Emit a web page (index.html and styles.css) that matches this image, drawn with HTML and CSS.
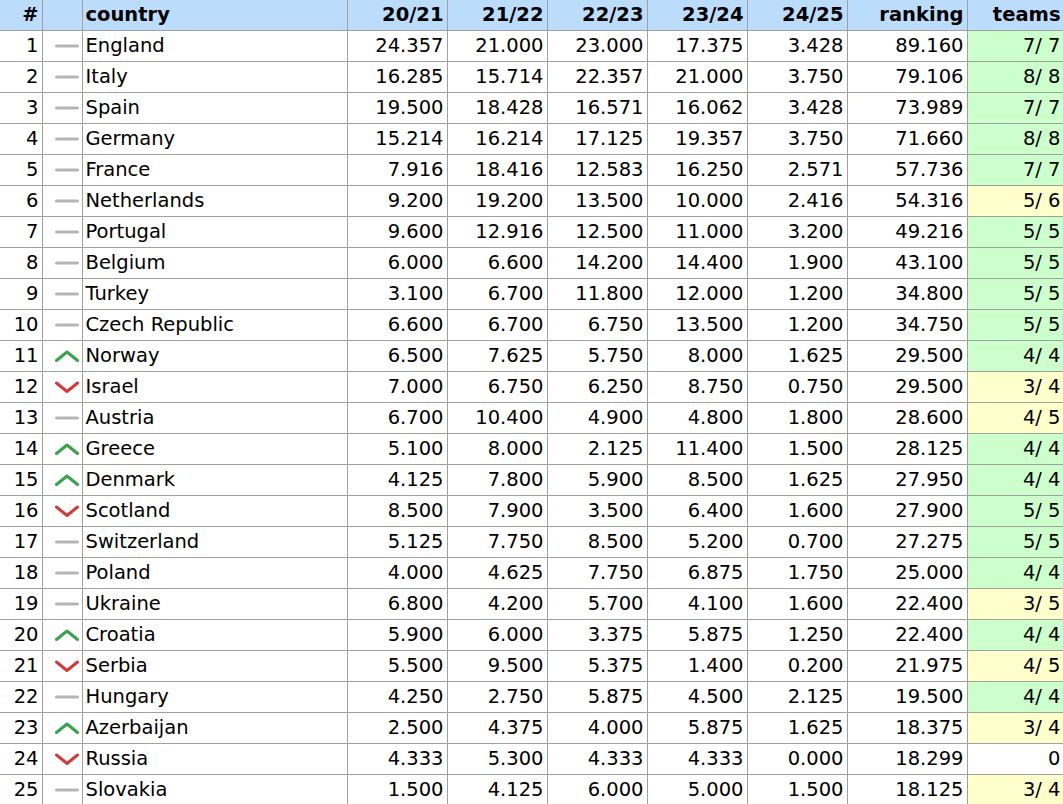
FILE: index.html
```html
<!DOCTYPE html>
<html>
<head>
<meta charset="utf-8">
<link rel="stylesheet" href="styles.css">
</head>
<body>
<svg width="0" height="0" class="defs">
  <defs>
    <symbol id="same" viewBox="0 0 24 14"><line x1="1.5" y1="7" x2="22.5" y2="7" stroke="#b5b5b5" stroke-width="3" stroke-linecap="round"/></symbol>
    <symbol id="up" viewBox="0 0 24 14"><polyline points="1.5,11.5 12,3 22.5,11.5" fill="none" stroke="#3aa24a" stroke-width="3" stroke-linecap="round" stroke-linejoin="round"/></symbol>
    <symbol id="down" viewBox="0 0 24 14"><polyline points="1.5,3 12,11.5 22.5,3" fill="none" stroke="#d43a35" stroke-width="3" stroke-linecap="round" stroke-linejoin="round"/></symbol>
  </defs>
</svg>
<table class="rank">
  <colgroup>
    <col class="c-pos"><col class="c-ico"><col class="c-country">
    <col class="c-season"><col class="c-season"><col class="c-season"><col class="c-season"><col class="c-season">
    <col class="c-rank"><col class="c-teams">
  </colgroup>
  <thead>
    <tr><th class="num">#</th><th></th><th class="txt">country</th><th class="num">20/21</th><th class="num">21/22</th><th class="num">22/23</th><th class="num">23/24</th><th class="num">24/25</th><th class="num">ranking</th><th class="num">teams</th></tr>
  </thead>
  <tbody>
    <tr><td class="num">1</td><td class="ico"><svg><use href="#same"/></svg></td><td>England</td><td class="num">24.357</td><td class="num">21.000</td><td class="num">23.000</td><td class="num">17.375</td><td class="num">3.428</td><td class="num">89.160</td><td class="num full">7/ 7</td></tr>
    <tr><td class="num">2</td><td class="ico"><svg><use href="#same"/></svg></td><td>Italy</td><td class="num">16.285</td><td class="num">15.714</td><td class="num">22.357</td><td class="num">21.000</td><td class="num">3.750</td><td class="num">79.106</td><td class="num full">8/ 8</td></tr>
    <tr><td class="num">3</td><td class="ico"><svg><use href="#same"/></svg></td><td>Spain</td><td class="num">19.500</td><td class="num">18.428</td><td class="num">16.571</td><td class="num">16.062</td><td class="num">3.428</td><td class="num">73.989</td><td class="num full">7/ 7</td></tr>
    <tr><td class="num">4</td><td class="ico"><svg><use href="#same"/></svg></td><td>Germany</td><td class="num">15.214</td><td class="num">16.214</td><td class="num">17.125</td><td class="num">19.357</td><td class="num">3.750</td><td class="num">71.660</td><td class="num full">8/ 8</td></tr>
    <tr><td class="num">5</td><td class="ico"><svg><use href="#same"/></svg></td><td>France</td><td class="num">7.916</td><td class="num">18.416</td><td class="num">12.583</td><td class="num">16.250</td><td class="num">2.571</td><td class="num">57.736</td><td class="num full">7/ 7</td></tr>
    <tr><td class="num">6</td><td class="ico"><svg><use href="#same"/></svg></td><td>Netherlands</td><td class="num">9.200</td><td class="num">19.200</td><td class="num">13.500</td><td class="num">10.000</td><td class="num">2.416</td><td class="num">54.316</td><td class="num part">5/ 6</td></tr>
    <tr><td class="num">7</td><td class="ico"><svg><use href="#same"/></svg></td><td>Portugal</td><td class="num">9.600</td><td class="num">12.916</td><td class="num">12.500</td><td class="num">11.000</td><td class="num">3.200</td><td class="num">49.216</td><td class="num full">5/ 5</td></tr>
    <tr><td class="num">8</td><td class="ico"><svg><use href="#same"/></svg></td><td>Belgium</td><td class="num">6.000</td><td class="num">6.600</td><td class="num">14.200</td><td class="num">14.400</td><td class="num">1.900</td><td class="num">43.100</td><td class="num full">5/ 5</td></tr>
    <tr><td class="num">9</td><td class="ico"><svg><use href="#same"/></svg></td><td>Turkey</td><td class="num">3.100</td><td class="num">6.700</td><td class="num">11.800</td><td class="num">12.000</td><td class="num">1.200</td><td class="num">34.800</td><td class="num full">5/ 5</td></tr>
    <tr><td class="num">10</td><td class="ico"><svg><use href="#same"/></svg></td><td>Czech Republic</td><td class="num">6.600</td><td class="num">6.700</td><td class="num">6.750</td><td class="num">13.500</td><td class="num">1.200</td><td class="num">34.750</td><td class="num full">5/ 5</td></tr>
    <tr><td class="num">11</td><td class="ico"><svg><use href="#up"/></svg></td><td>Norway</td><td class="num">6.500</td><td class="num">7.625</td><td class="num">5.750</td><td class="num">8.000</td><td class="num">1.625</td><td class="num">29.500</td><td class="num full">4/ 4</td></tr>
    <tr><td class="num">12</td><td class="ico"><svg><use href="#down"/></svg></td><td>Israel</td><td class="num">7.000</td><td class="num">6.750</td><td class="num">6.250</td><td class="num">8.750</td><td class="num">0.750</td><td class="num">29.500</td><td class="num part">3/ 4</td></tr>
    <tr><td class="num">13</td><td class="ico"><svg><use href="#same"/></svg></td><td>Austria</td><td class="num">6.700</td><td class="num">10.400</td><td class="num">4.900</td><td class="num">4.800</td><td class="num">1.800</td><td class="num">28.600</td><td class="num part">4/ 5</td></tr>
    <tr><td class="num">14</td><td class="ico"><svg><use href="#up"/></svg></td><td>Greece</td><td class="num">5.100</td><td class="num">8.000</td><td class="num">2.125</td><td class="num">11.400</td><td class="num">1.500</td><td class="num">28.125</td><td class="num full">4/ 4</td></tr>
    <tr><td class="num">15</td><td class="ico"><svg><use href="#up"/></svg></td><td>Denmark</td><td class="num">4.125</td><td class="num">7.800</td><td class="num">5.900</td><td class="num">8.500</td><td class="num">1.625</td><td class="num">27.950</td><td class="num full">4/ 4</td></tr>
    <tr><td class="num">16</td><td class="ico"><svg><use href="#down"/></svg></td><td>Scotland</td><td class="num">8.500</td><td class="num">7.900</td><td class="num">3.500</td><td class="num">6.400</td><td class="num">1.600</td><td class="num">27.900</td><td class="num full">5/ 5</td></tr>
    <tr><td class="num">17</td><td class="ico"><svg><use href="#same"/></svg></td><td>Switzerland</td><td class="num">5.125</td><td class="num">7.750</td><td class="num">8.500</td><td class="num">5.200</td><td class="num">0.700</td><td class="num">27.275</td><td class="num full">5/ 5</td></tr>
    <tr><td class="num">18</td><td class="ico"><svg><use href="#same"/></svg></td><td>Poland</td><td class="num">4.000</td><td class="num">4.625</td><td class="num">7.750</td><td class="num">6.875</td><td class="num">1.750</td><td class="num">25.000</td><td class="num full">4/ 4</td></tr>
    <tr><td class="num">19</td><td class="ico"><svg><use href="#same"/></svg></td><td>Ukraine</td><td class="num">6.800</td><td class="num">4.200</td><td class="num">5.700</td><td class="num">4.100</td><td class="num">1.600</td><td class="num">22.400</td><td class="num part">3/ 5</td></tr>
    <tr><td class="num">20</td><td class="ico"><svg><use href="#up"/></svg></td><td>Croatia</td><td class="num">5.900</td><td class="num">6.000</td><td class="num">3.375</td><td class="num">5.875</td><td class="num">1.250</td><td class="num">22.400</td><td class="num full">4/ 4</td></tr>
    <tr><td class="num">21</td><td class="ico"><svg><use href="#down"/></svg></td><td>Serbia</td><td class="num">5.500</td><td class="num">9.500</td><td class="num">5.375</td><td class="num">1.400</td><td class="num">0.200</td><td class="num">21.975</td><td class="num part">4/ 5</td></tr>
    <tr><td class="num">22</td><td class="ico"><svg><use href="#same"/></svg></td><td>Hungary</td><td class="num">4.250</td><td class="num">2.750</td><td class="num">5.875</td><td class="num">4.500</td><td class="num">2.125</td><td class="num">19.500</td><td class="num full">4/ 4</td></tr>
    <tr><td class="num">23</td><td class="ico"><svg><use href="#up"/></svg></td><td>Azerbaijan</td><td class="num">2.500</td><td class="num">4.375</td><td class="num">4.000</td><td class="num">5.875</td><td class="num">1.625</td><td class="num">18.375</td><td class="num part">3/ 4</td></tr>
    <tr><td class="num">24</td><td class="ico"><svg><use href="#down"/></svg></td><td>Russia</td><td class="num">4.333</td><td class="num">5.300</td><td class="num">4.333</td><td class="num">4.333</td><td class="num">0.000</td><td class="num">18.299</td><td class="num">0</td></tr>
    <tr><td class="num">25</td><td class="ico"><svg><use href="#same"/></svg></td><td>Slovakia</td><td class="num">1.500</td><td class="num">4.125</td><td class="num">6.000</td><td class="num">5.000</td><td class="num">1.500</td><td class="num">18.125</td><td class="num part">3/ 4</td></tr>
  </tbody>
</table>
</body>
</html>
```
FILE: styles.css
```css
html, body {
  margin: 0;
  padding: 0;
  background: #ffffff;
}
body {
  font-family: "DejaVu Sans", Verdana, sans-serif;
  font-size: 19.5px;
  color: #000;
  overflow: hidden;
}
.defs {
  position: absolute;
  width: 0;
  height: 0;
}
.rank {
  border-collapse: collapse;
  table-layout: fixed;
  width: 1064px;
}
.c-pos { width: 42px; }
.c-ico { width: 40px; }
.c-country { width: 265px; }
.c-season { width: 100px; }
.c-rank { width: 120px; }
.c-teams { width: 97px; }

.rank th, .rank td {
  border: 1px solid #a0a0a0;
  padding: 0 3px 0 3px;
  white-space: nowrap;
  overflow: hidden;
}
.rank th:first-child, .rank td:first-child {
  border-left: none;
}
.rank thead th {
  border-top: none;
  background: #bcdcfc;
  font-weight: bold;
  height: 30px;
  line-height: 30px;
  text-align: left;
}
.rank td {
  height: 30px;
  line-height: 30px;
}
.rank .num { text-align: right; }
.rank th.num { text-align: right; }
.rank .txt { text-align: left; }
.rank td.ico {
  padding: 0 0 0 12px;
}
.rank td.ico svg {
  display: block;
  width: 24px;
  height: 14px;
}
.full { background: #ccffcc; }
.part { background: #ffffcc; }
```
